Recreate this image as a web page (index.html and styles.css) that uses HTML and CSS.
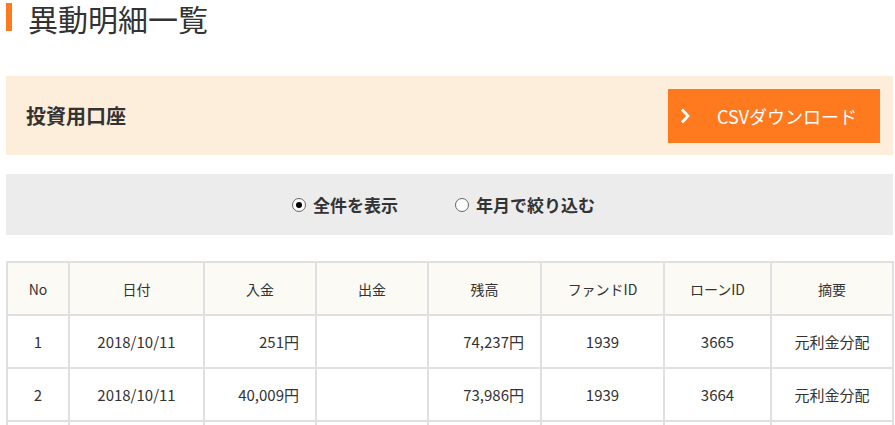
FILE: index.html
```html
<!DOCTYPE html>
<html lang="ja">
<head>
    <meta charset="UTF-8">
    <title>異動明細一覧</title>
    <link rel="stylesheet" href="styles.css">
</head>
<body>
    <div class="page">
        <h1 class="page-title">異動明細一覧</h1>

        <!-- 口座とCSV -->
        <div class="account-box">
            <span class="account-name">投資用口座</span>
            <a class="csv-button" href="#">
                <svg class="chevron" width="12" height="18" viewBox="0 0 12 18">
                    <polyline points="3,2.5 9,9 3,15.5" fill="none" stroke="#fff" stroke-width="2.8"/>
                </svg>
                <span>CSVダウンロード</span>
            </a>
        </div>

        <!-- 表示切替 -->
        <div class="filter-box">
            <label class="radio-item"><span class="radio checked"></span>全件を表示</label>
            <label class="radio-item"><span class="radio"></span>年月で絞り込む</label>
        </div>

        <table class="history">
            <colgroup>
                <col style="width:62px">
                <col style="width:135px">
                <col style="width:112px">
                <col style="width:112px">
                <col style="width:113px">
                <col style="width:123px">
                <col style="width:107px">
                <col style="width:122px">
            </colgroup>
            <thead>
                <tr>
                    <th>No</th>
                    <th>日付</th>
                    <th>入金</th>
                    <th>出金</th>
                    <th>残高</th>
                    <th>ファンドID</th>
                    <th>ローンID</th>
                    <th>摘要</th>
                </tr>
            </thead>
            <tbody>
                <tr>
                    <td>1</td>
                    <td>2018/10/11</td>
                    <td class="num">251円</td>
                    <td class="num"></td>
                    <td class="num">74,237円</td>
                    <td>1939</td>
                    <td>3665</td>
                    <td>元利金分配</td>
                </tr>
                <tr>
                    <td>2</td>
                    <td>2018/10/11</td>
                    <td class="num">40,009円</td>
                    <td class="num"></td>
                    <td class="num">73,986円</td>
                    <td>1939</td>
                    <td>3664</td>
                    <td>元利金分配</td>
                </tr>
                <tr>
                    <td>3</td>
                    <td>2018/10/11</td>
                    <td class="num">320円</td>
                    <td class="num"></td>
                    <td class="num">33,977円</td>
                    <td>1939</td>
                    <td>3663</td>
                    <td>元利金分配</td>
                </tr>
            </tbody>
        </table>
    </div>
</body>
</html>
```

FILE: styles.css
```css
/* ページ全体 */
body {
    margin: 0;
    padding: 0;
    background-color: #ffffff;
    color: #333333;
    font-family: "Noto Sans CJK JP", "Noto Sans", sans-serif;
}

.page {
    padding: 0 2px 0 6px;
}

/* タイトル */
.page-title {
    margin: 0;
    padding: 0 0 0 22px;
    height: 34px;
    font-size: 30px;
    font-weight: normal;
    line-height: 36px;
    color: #333333;
    position: relative;
}
.page-title::before {
    content: "";
    position: absolute;
    left: 0;
    top: 3px;
    width: 6px;
    height: 28px;
    background-color: #ff7a1f;
}

/* 口座ボックス */
.account-box {
    margin-top: 42px;
    height: 79px;
    background-color: #fdeedb;
    display: flex;
    align-items: center;
    justify-content: space-between;
    padding: 0 13px 0 20px;
}
.account-name {
    font-size: 20px;
    font-weight: bold;
    color: #333333;
}
.csv-button {
    width: 212px;
    height: 54px;
    background-color: #ff7a1f;
    color: #ffffff;
    text-decoration: none;
    display: flex;
    align-items: center;
    font-size: 18px;
}
.csv-button .chevron {
    margin: 0 26px 0 11px;
}

/* 絞り込み */
.filter-box {
    margin-top: 19px;
    height: 61px;
    background-color: #ececec;
    display: flex;
    align-items: center;
    justify-content: center;
    gap: 57px;
    padding-right: 12px;
}
.radio-item {
    display: flex;
    align-items: center;
    font-size: 17px;
    font-weight: bold;
    color: #333333;
}
.radio {
    width: 12px;
    height: 12px;
    border: 1px solid #666666;
    border-radius: 50%;
    background-color: #ffffff;
    margin-right: 7px;
    position: relative;
}
.radio.checked::after {
    content: "";
    position: absolute;
    left: 3px;
    top: 3px;
    width: 6px;
    height: 6px;
    border-radius: 50%;
    background-color: #000000;
}

/* 明細テーブル */
.history {
    margin-top: 26px;
    border-collapse: collapse;
    table-layout: fixed;
    width: 888px;
    font-size: 14px;
    color: #333333;
}
.history th,
.history td {
    border: 2px solid #e0e0e0;
    text-align: center;
    padding: 0;
}
.history th {
    height: 51px;
    background-color: #fcfaf5;
    font-weight: normal;
}
.history td {
    height: 51px;
    font-size: 15px;
}
.history td.num {
    text-align: right;
    padding-right: 16px;
}
```
